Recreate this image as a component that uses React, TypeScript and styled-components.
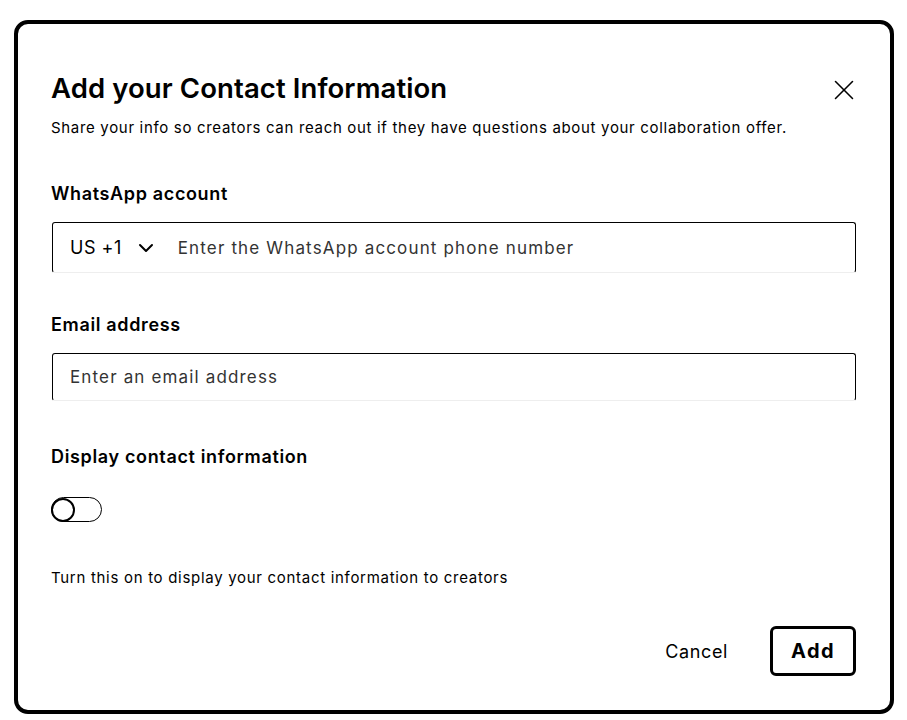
import { useState } from "react"
import styled, { createGlobalStyle } from "styled-components"
import { ChevronDown, X } from "lucide-react"

const GlobalStyle = createGlobalStyle`
  html, body {
    margin: 0;
    padding: 0;
    background: #fff;
  }
  body {
    font-family: Inter, "Noto Sans", sans-serif;
    color: #000;
  }
  * {
    box-sizing: border-box;
  }
`

export default function App() {
  const [shown, setShown] = useState(false)
  return (
    <Page>
      <GlobalStyle />
      <Modal>
        <Header>
          <Title>Add your Contact Information</Title>
          <CloseButton aria-label="Close">
            <X size={34} strokeWidth={1.1} />
          </CloseButton>
        </Header>
        <Subtitle>
          Share your info so creators can reach out if they have questions about your
          collaboration offer.
        </Subtitle>

        <Label style={{ marginTop: 44 }}>WhatsApp account</Label>
        <Field $height={51}>
          <CountryPicker>
            US +1
            <ChevronDown size={24} strokeWidth={2} />
          </CountryPicker>
          <Input placeholder="Enter the WhatsApp account phone number" />
        </Field>

        <Label style={{ marginTop: 40 }}>Email address</Label>
        <Field $height={48}>
          <Input placeholder="Enter an email address" />
        </Field>

        <Label style={{ marginTop: 44 }}>Display contact information</Label>
        <Toggle $on={shown} onClick={() => setShown(!shown)}>
          <Knob $on={shown} />
        </Toggle>
        <Hint>Turn this on to display your contact information to creators</Hint>

        <Footer>
          <CancelButton>Cancel</CancelButton>
          <AddButton>Add</AddButton>
        </Footer>
      </Modal>
    </Page>
  )
}

const Page = styled.div`
  width: 907px;
  height: 720px;
  padding: 20px 0 0 14px;
  overflow: hidden;
`

const Modal = styled.div`
  width: 880px;
  height: 694px;
  border: 4px solid #000;
  border-radius: 14px;
  padding: 47px 34px 34px 33px;
  display: flex;
  flex-direction: column;
  background: #fff;
`

const Header = styled.div`
  display: flex;
  align-items: center;
  justify-content: space-between;
  height: 34px;
`

const Title = styled.h1`
  margin: 0;
  font-size: 27.5px;
  line-height: 34px;
  font-weight: 600;
  letter-spacing: 0.1px;
`

const CloseButton = styled.button`
  border: none;
  background: none;
  padding: 0;
  margin: 3px -5px 0 0;
  display: flex;
  color: #000;
  cursor: pointer;
`

const Subtitle = styled.p`
  margin: 13px 0 0 0;
  font-size: 15px;
  line-height: 20px;
  letter-spacing: 0.68px;
`

const Label = styled.div`
  font-size: 18px;
  line-height: 24px;
  font-weight: 600;
  letter-spacing: 0.65px;
`

const Field = styled.div<{ $height: number }>`
  margin-top: 16px;
  margin-left: 1px;
  height: ${(p) => p.$height}px;
  border: 1px solid #000;
  border-bottom-color: #eee;
  border-radius: 3px;
  display: flex;
  align-items: center;
  padding: 0 17px;
  gap: 20px;
`

const CountryPicker = styled.div`
  display: flex;
  align-items: center;
  gap: 12px;
  font-size: 18px;
  letter-spacing: 0.5px;
  white-space: nowrap;
`

const Input = styled.input`
  flex: 1;
  border: none;
  outline: none;
  background: transparent;
  font-family: inherit;
  font-size: 17px;
  padding: 0;
  color: #000;
  letter-spacing: 1.15px;
  &::placeholder {
    color: #333;
  }
`

const Toggle = styled.button<{ $on: boolean }>`
  margin-top: 28px;
  width: 51px;
  height: 25px;
  border: 1.5px solid #000;
  border-radius: 13px;
  padding: 0;
  background: ${(p) => (p.$on ? "#000" : "#fff")};
  display: flex;
  align-items: center;
  cursor: pointer;
`

const Knob = styled.span<{ $on: boolean }>`
  width: 24px;
  height: 24px;
  border-radius: 50%;
  border: 2px solid #000;
  background: #fff;
  margin-left: ${(p) => (p.$on ? "25px" : "-1px")};
`

const Hint = styled.p`
  margin: 46px 0 0 0;
  font-size: 15px;
  line-height: 20px;
  letter-spacing: 0.7px;
`

const Footer = styled.div`
  margin-top: auto;
  display: flex;
  justify-content: flex-end;
  align-items: center;
  gap: 26px;
`

const CancelButton = styled.button`
  border: none;
  background: none;
  font-family: inherit;
  font-size: 18px;
  letter-spacing: 0.6px;
  padding: 0 16px;
  height: 50px;
  color: #000;
  cursor: pointer;
`

const AddButton = styled.button`
  width: 86px;
  height: 50px;
  border: 3px solid #000;
  border-radius: 6px;
  background: #fff;
  font-family: inherit;
  font-size: 20px;
  font-weight: 700;
  letter-spacing: 1.5px;
  color: #000;
  cursor: pointer;
`
